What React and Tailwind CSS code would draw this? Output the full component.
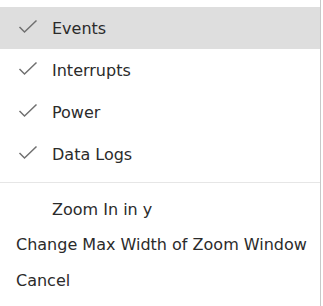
import React from 'react';

function Check() {
  return (
    <svg width="20" height="16" viewBox="0 0 20 16" className="text-[#707070]">
      <path d="M1.5 8 L6.5 13 L18.5 1.5" fill="none" stroke="currentColor" strokeWidth="1.5" />
    </svg>
  );
}

const checked = ['Events', 'Interrupts', 'Power', 'Data Logs'];

export default function App() {
  return (
    <div className="w-[323px] h-[306px] bg-white flex" style={{ fontFamily: '"DejaVu Sans", sans-serif' }}>
      <div className="w-[321px] border-r border-[#c8c8c8] pt-[7px] text-[16px] text-[#2b2b2b]">
        {checked.map((label, i) => (
          <div
            key={label}
            className={'h-[42px] flex items-center ' + (i === 0 ? 'bg-[#dedede]' : '')}
          >
            <div className="w-[52px] pl-[18px] pb-[2px] flex items-center">
              <Check />
            </div>
            <span className="pt-[1px]">{label}</span>
          </div>
        ))}
        <div className="h-[7px]" />
        <div className="border-t border-[#e6e6e6]" />
        <div className="h-[9px]" />
        <div className="h-[35px] flex items-center pl-[52px]">Zoom In in y</div>
        <div className="h-[36px] flex items-center pl-[16px]">Change Max Width of Zoom Window</div>
        <div className="h-[36px] flex items-center pl-[16px]">Cancel</div>
      </div>
      <div className="w-[2px] bg-white" />
    </div>
  );
}
